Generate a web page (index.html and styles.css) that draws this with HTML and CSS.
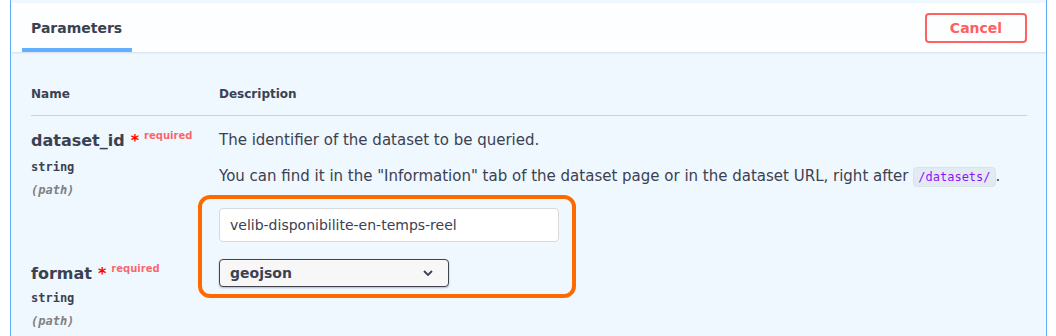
FILE: index.html
```html
<!DOCTYPE html>
<html>
<head>
  <meta charset="utf-8" />
  <title>Parameters</title>
  <link rel="stylesheet" href="styles.css">
</head>
<body>
  <div class="opblock">
    <div class="section-header">
      <div class="tab-item"><span>Parameters</span></div>
      <button type="button" class="cancel">Cancel</button>
    </div>
    <div class="table-container">
      <div class="params-head">
        <div>Name</div>
        <div>Description</div>
      </div>
      <div class="param-row">
        <div class="param-name">
          <div class="name-line">dataset_id<span class="star">*</span><span class="req">required</span></div>
          <div class="param-type">string</div>
          <div class="param-in">(path)</div>
        </div>
        <div class="param-desc">
          <p>The identifier of the dataset to be queried.</p>
          <p>You can find it in the "Information" tab of the dataset page or in the dataset URL, right after <code>/datasets/</code>.</p>
          <input type="text" class="text-input" value="velib-disponibilite-en-temps-reel" />
        </div>
      </div>
      <div class="param-row">
        <div class="param-name">
          <div class="name-line">format<span class="star">*</span><span class="req">required</span></div>
          <div class="param-type">string</div>
          <div class="param-in">(path)</div>
        </div>
        <div class="param-desc">
          <div class="select-wrap">
            <select class="format-select">
              <option>geojson</option>
            </select>
            <svg class="chevron" width="10" height="6" viewBox="0 0 10 6"><path d="M1 1 L5 5 L9 1" fill="none" stroke="#3b4151" stroke-width="1.8"/></svg>
          </div>
        </div>
      </div>
    </div>
    <div class="highlight"></div>
  </div>
</body>
</html>
```

FILE: styles.css
```css
html, body {
  margin: 0;
  padding: 0;
  background: #fff;
}
body {
  font-family: "DejaVu Sans", sans-serif;
  color: #3b4151;
  height: 336px;
  overflow: hidden;
}
.opblock {
  position: relative;
  margin: 0 9px 0 10px;
  height: 336px;
  border-left: 1px solid #61affe;
  border-right: 1px solid #61affe;
  background: #eff7ff;
  padding-top: 3px;
  box-sizing: border-box;
}
.section-header {
  position: relative;
  display: flex;
  align-items: center;
  justify-content: space-between;
  height: 49px;
  padding: 0 19px 0 20px;
  background: rgba(255, 255, 255, 0.8);
  box-shadow: 0 1px 2px rgba(0, 0, 0, 0.1);
}
.tab-item {
  position: relative;
  height: 100%;
  display: flex;
  align-items: center;
  font-size: 14px;
  font-weight: bold;
}
.tab-item::after {
  content: "";
  position: absolute;
  left: -9px;
  right: -10px;
  bottom: 0;
  height: 4px;
  background: #61affe;
}
.cancel {
  font-family: "DejaVu Sans", sans-serif;
  font-size: 14px;
  font-weight: bold;
  color: #ff6060;
  background: transparent;
  border: 2px solid #ff6060;
  border-radius: 4px;
  width: 102px;
  height: 30px;
  padding: 0;
}
.table-container {
  padding: 20px 19px 0 20px;
}
.params-head {
  display: grid;
  grid-template-columns: 188px 1fr;
  font-size: 12px;
  font-weight: bold;
  line-height: 20px;
  padding: 12px 0 11px;
  border-bottom: 1px solid rgba(59, 65, 81, 0.2);
}
.param-row {
  display: grid;
  grid-template-columns: 188px 1fr;
  padding-top: 10px;
}
.name-line {
  font-size: 16px;
  font-weight: bold;
  line-height: 20px;
  padding-top: 5px;
}
.star {
  color: red;
  margin-left: 6px;
}
.req {
  position: relative;
  top: -7px;
  font-size: 10px;
  color: rgba(255, 0, 0, 0.6);
  margin-left: 5px;
}
.param-type {
  font-family: "DejaVu Sans Mono", monospace;
  font-size: 12px;
  font-weight: bold;
  margin-top: 7px;
  line-height: 14px;
}
.param-in {
  font-family: "DejaVu Sans Mono", monospace;
  font-size: 12px;
  font-weight: bold;
  font-style: italic;
  color: #808080;
  margin-top: 9px;
  line-height: 14px;
}
.param-row + .param-row .param-type {
  margin-top: 5px;
}
.param-desc p {
  font-size: 15px;
  line-height: 22px;
  margin: 0 0 11px;
  padding-top: 3px;
}
.param-desc code {
  font-family: "DejaVu Sans Mono", monospace;
  font-size: 12px;
  color: #9012fe;
  background: rgba(0, 0, 0, 0.05);
  border: 1px solid rgba(0, 0, 0, 0.03);
  border-radius: 4px;
  padding: 2px 4px;
}
.text-input {
  display: block;
  box-sizing: border-box;
  width: 340px;
  height: 34px;
  margin: 20px 0 7px;
  padding: 0 10px;
  font-family: "DejaVu Sans", sans-serif;
  font-size: 14px;
  color: #3b4151;
  background: #fff;
  border: 1px solid #d9d9d9;
  border-radius: 4px;
}
.select-wrap {
  position: relative;
  width: 230px;
}
.format-select {
  appearance: none;
  -webkit-appearance: none;
  display: block;
  box-sizing: border-box;
  width: 230px;
  height: 28px;
  padding: 0 40px 0 10px;
  font-family: "DejaVu Sans", sans-serif;
  font-size: 14px;
  font-weight: bold;
  color: #3b4151;
  background: #f7f7f7;
  border: 1px solid #41444e;
  border-radius: 4px;
  box-shadow: 0 1px 2px 0 rgba(0, 0, 0, 0.25);
}
.chevron {
  position: absolute;
  right: 16px;
  top: 11px;
}
.highlight {
  position: absolute;
  left: 187px;
  top: 195px;
  width: 378px;
  height: 103px;
  box-sizing: border-box;
  border: 4px solid #ff6a00;
  border-radius: 12px;
  pointer-events: none;
}
```
